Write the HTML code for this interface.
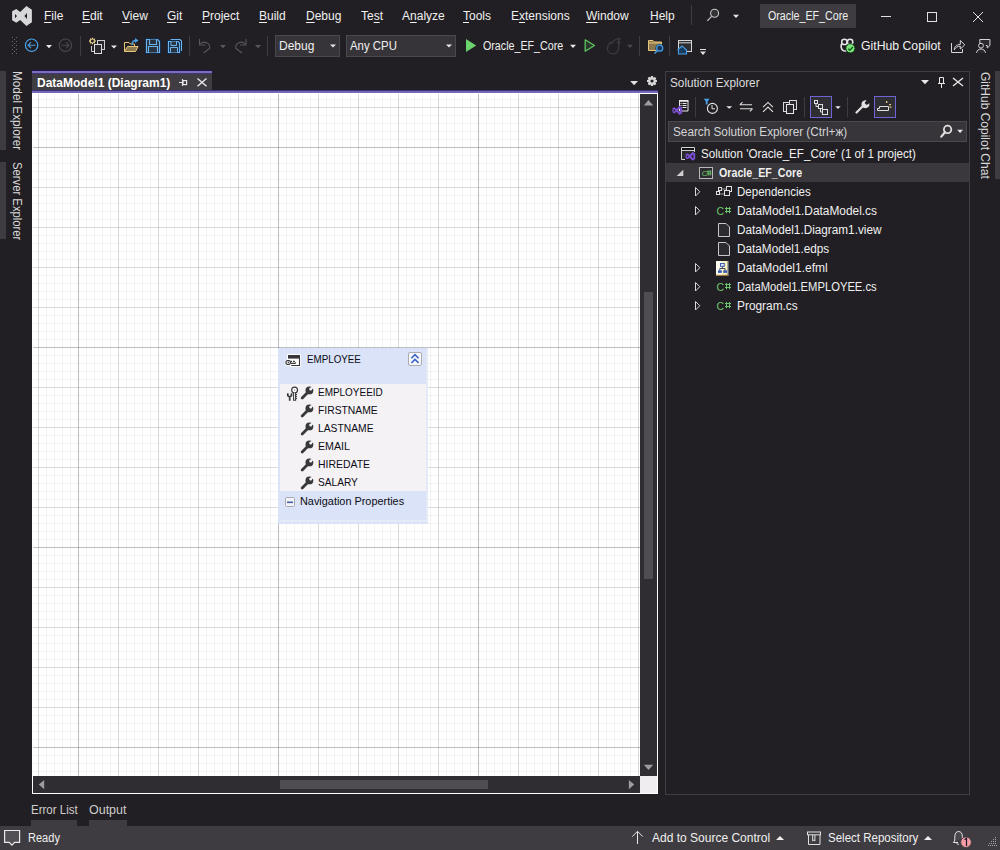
<!DOCTYPE html>
<html><head><meta charset="utf-8">
<style>
*{box-sizing:border-box;margin:0;padding:0}
html,body{width:1000px;height:850px;overflow:hidden;background:#211f23;font-family:"Liberation Sans",sans-serif;font-size:12px;color:#f0f0f0;position:relative}
.a{position:absolute}
.t{position:absolute;white-space:pre;line-height:1;transform-origin:0 0}
.menu .t{top:10px;color:#f0f0f0}
.u{text-decoration:underline;text-decoration-thickness:1px;text-underline-offset:2px}
.combo{position:absolute;top:35px;height:22px;background:#363438;border:1px solid #4a484c}
#grid{position:absolute;left:33px;top:94px;width:607px;height:682px;background-color:#fff;
background-image:
linear-gradient(to right,rgba(50,46,56,.16) 0 1px,transparent 1px),
linear-gradient(to bottom,rgba(50,46,56,.16) 0 1px,transparent 1px),
linear-gradient(to right,rgba(50,46,56,.128) 0 1px,transparent 1px),
linear-gradient(to bottom,rgba(50,46,56,.128) 0 1px,transparent 1px),
linear-gradient(to right,rgba(50,46,56,.058) 0 1px,transparent 1px),
linear-gradient(to bottom,rgba(50,46,56,.058) 0 1px,transparent 1px);
background-size:200px 100%,100% 200px,40px 100%,100% 40px,8px 100%,100% 8px;
background-position:45px 0,0 53px,5px 0,0 13px,5px 0,0 5px;
}
.se .t{color:#f0f0f0}
.ent .t{font-size:11px;color:#0c0c14}
.vt{position:absolute;white-space:pre;line-height:1;transform-origin:0 0;color:#d8d8d8}

</style></head><body>
<!-- ===== menu bar ===== -->
<div class="menu">
<span class="t" style="left:44px"><span class="u">F</span>ile</span>
<span class="t" style="left:82px"><span class="u">E</span>dit</span>
<span class="t" style="left:122px"><span class="u">V</span>iew</span>
<span class="t" style="left:167px"><span class="u">G</span>it</span>
<span class="t" style="left:202px"><span class="u">P</span>roject</span>
<span class="t" style="left:259px"><span class="u">B</span>uild</span>
<span class="t" style="left:306px"><span class="u">D</span>ebug</span>
<span class="t" style="left:361px">Te<span class="u">s</span>t</span>
<span class="t" style="left:402px">A<span class="u">n</span>alyze</span>
<span class="t" style="left:463px"><span class="u">T</span>ools</span>
<span class="t" style="left:511px">E<span class="u">x</span>tensions</span>
<span class="t" style="left:586px"><span class="u">W</span>indow</span>
<span class="t" style="left:650px"><span class="u">H</span>elp</span>
</div>
<div class="a" style="left:760px;top:4px;width:96px;height:24px;background:#3e3c40"></div>
<span class="t" style="left:768px;top:10px;color:#f0f0f0;transform:scaleX(0.89)">Oracle_EF_Core</span>

<!-- ===== toolbar ===== -->
<div class="combo" style="left:275px;width:65px"></div>
<span class="t" style="left:279px;top:40px">Debug</span>
<div class="combo" style="left:346px;width:110px"></div>
<span class="t" style="left:350px;top:40px;transform:scaleX(0.95)">Any CPU</span>
<span class="t" style="left:483px;top:40px;transform:scaleX(0.89)">Oracle_EF_Core</span>
<span class="t" style="left:861px;top:40px;transform:scaleX(1.02)">GitHub Copilot</span>

<!-- ===== left strip ===== -->
<div class="a" style="left:0;top:71px;width:6px;height:79px;background:#3e3c40"></div>
<div class="a" style="left:0;top:162px;width:6px;height:77px;background:#3e3c40"></div>
<span class="vt" style="left:23px;top:71px;transform:rotate(90deg) scaleX(0.98)">Model Explorer</span>
<span class="vt" style="left:23px;top:162px;transform:rotate(90deg) scaleX(0.94)">Server Explorer</span>

<!-- ===== doc tab ===== -->
<div class="a" style="left:32px;top:70px;width:180px;height:20px;background:#3f3d41"></div>
<div class="a" style="left:32px;top:70px;width:180px;height:1px;background:#1c1456"></div>
<div class="a" style="left:32px;top:71px;width:180px;height:2px;background:#7c6fba"></div>
<div class="a" style="left:32px;top:73px;width:180px;height:1px;background:#40347a"></div>
<div class="a" style="left:32px;top:90px;width:626px;height:1px;background:#3a2f78"></div>
<div class="a" style="left:32px;top:91px;width:626px;height:2px;background:#7367b6"></div>
<span class="t" style="left:37px;top:77px;font-weight:bold;color:#fff">DataModel1 (Diagram1)</span>

<!-- ===== editor ===== -->
<div class="a" style="left:32px;top:93px;width:626px;height:701px;background:#fff"></div>
<div id="grid"></div>
<div class="a" style="left:640px;top:94px;width:17px;height:682px;background:#2f2d31"></div>
<div class="a" style="left:644px;top:292px;width:9px;height:287px;background:#4f4d51"></div>
<div class="a" style="left:33px;top:776px;width:607px;height:17px;background:#2f2d31"></div>
<div class="a" style="left:280px;top:780px;width:208px;height:9px;background:#4f4d51"></div>
<div class="a" style="left:640px;top:776px;width:17px;height:17px;background:#efedf0"></div>

<!-- entity -->
<div class="ent">
<div class="a" style="left:278px;top:348px;width:150px;height:176px;background:#dae3f7"></div>
<div class="a" style="left:426px;top:350px;width:2px;height:172px;background:#e5eaf8"></div>
<div class="a" style="left:280px;top:520px;width:147px;height:2px;background:#e5eaf8"></div>
<div class="a" style="left:280px;top:384px;width:146px;height:107px;background:#f4f2f5"></div>
<span class="t" style="left:307px;top:354px;transform:scaleX(0.89)">EMPLOYEE</span>
<span class="t" style="left:318px;top:387px;transform:scaleX(0.905)">EMPLOYEEID</span>
<span class="t" style="left:318px;top:405px;transform:scaleX(0.94)">FIRSTNAME</span>
<span class="t" style="left:318px;top:423px;transform:scaleX(0.936)">LASTNAME</span>
<span class="t" style="left:318px;top:441px;transform:scaleX(0.97)">EMAIL</span>
<span class="t" style="left:318px;top:459px;transform:scaleX(0.95)">HIREDATE</span>
<span class="t" style="left:318px;top:477px;transform:scaleX(0.92)">SALARY</span>
<span class="t" style="left:300px;top:496px;transform:scaleX(0.99)">Navigation Properties</span>
</div>

<!-- ===== solution explorer ===== -->
<div class="a" style="left:665px;top:71px;width:305px;height:724px;border:1px solid #3f3e42"></div>
<span class="t" style="left:670px;top:77px;color:#dcdcdc;transform:scaleX(0.98)">Solution Explorer</span>
<div class="a" style="left:668px;top:121px;width:299px;height:21px;background:#37353a;border:1px solid #4a484c"></div>
<span class="t" style="left:673px;top:126px;color:#d4d4d4;transform:scaleX(0.98)">Search Solution Explorer (Ctrl+ж)</span>
<div class="a" style="left:666px;top:163px;width:303px;height:19px;background:#3a383c"></div>
<div class="se">
<span class="t" style="left:701px;top:148px;transform:scaleX(0.968)">Solution 'Oracle_EF_Core' (1 of 1 project)</span>
<span class="t" style="left:719px;top:167px;font-weight:bold;transform:scaleX(0.89)">Oracle_EF_Core</span>
<span class="t" style="left:737px;top:186px;transform:scaleX(0.96)">Dependencies</span>
<span class="t" style="left:737px;top:205px;transform:scaleX(0.99)">DataModel1.DataModel.cs</span>
<span class="t" style="left:737px;top:224px;transform:scaleX(0.98)">DataModel1.Diagram1.view</span>
<span class="t" style="left:737px;top:243px;transform:scaleX(0.98)">DataModel1.edps</span>
<span class="t" style="left:737px;top:262px;transform:scaleX(1.0)">DataModel1.efml</span>
<span class="t" style="left:737px;top:281px;transform:scaleX(0.935)">DataModel1.EMPLOYEE.cs</span>
<span class="t" style="left:737px;top:300px;transform:scaleX(0.99)">Program.cs</span>
</div>

<!-- right strip -->
<div class="a" style="left:995px;top:71px;width:5px;height:108px;background:#3e3c40"></div>
<span class="vt" style="left:991px;top:72px;transform:rotate(90deg)">GitHub Copilot Chat</span>

<!-- ===== bottom tabs ===== -->
<span class="t" style="left:31px;top:804px;color:#cfcdcb;transform:scaleX(0.96)">Error List</span>
<span class="t" style="left:89px;top:804px;color:#cfcdcb;transform:scaleX(1.04)">Output</span>
<div class="a" style="left:31px;top:820px;width:46px;height:6px;background:#3e3c40"></div>
<div class="a" style="left:89px;top:820px;width:38px;height:6px;background:#3e3c40"></div>

<!-- ===== status bar ===== -->
<div class="a" style="left:0;top:826px;width:1000px;height:24px;background:#3e3c40"></div>
<span class="t" style="left:28px;top:832px;transform:scaleX(0.92)">Ready</span>
<span class="t" style="left:652px;top:832px">Add to Source Control</span>
<span class="t" style="left:828px;top:832px;transform:scaleX(0.96)">Select Repository</span>

<svg class="a" style="left:0;top:0;z-index:5" width="1000" height="850" viewBox="0 0 1000 850">
<!-- VS logo -->
<path d="M12.1 11.3 L16.3 9 L20.2 12.1 L26.4 6 L31.9 9.7 V22.3 L26.4 25.9 L20.2 20.1 L16.3 22.8 L12.1 20.2 Z M15 13.9 L17 16.1 L15 18.2 Z M27 13 L24.4 16.1 L27 19 Z" fill="#d7d6d9" fill-rule="evenodd"/>
<!-- title bar: separator, search, dropdown -->
<rect x="691" y="5" width="1" height="20" fill="#3d3c40"/>
<circle cx="714.6" cy="13.2" r="4" fill="#333236" stroke="#c8c8c8" stroke-width="1.1"/>
<path d="M711.6 16.3 L707.3 20.8" stroke="#c8c8c8" stroke-width="1.2"/>
<path d="M733 14.8 H739 L736 18 Z" fill="#e8e8e8"/>
<!-- window controls -->
<rect x="881" y="16" width="10" height="1" fill="#e0e0e0"/>
<rect x="927.5" y="12.5" width="9" height="9" fill="none" stroke="#e0e0e0" stroke-width="1"/>
<path d="M973 12 L983 22 M983 12 L973 22" stroke="#e0e0e0" stroke-width="1"/>

<!-- toolbar gripper -->
<g fill="#6a6a6e">
<rect x="12" y="37" width="1" height="1"/><rect x="16" y="37" width="1" height="1"/>
<rect x="14" y="39" width="1" height="1"/>
<rect x="12" y="41" width="1" height="1"/><rect x="16" y="41" width="1" height="1"/>
<rect x="14" y="43" width="1" height="1"/>
<rect x="12" y="45" width="1" height="1"/><rect x="16" y="45" width="1" height="1"/>
<rect x="14" y="47" width="1" height="1"/>
<rect x="12" y="49" width="1" height="1"/><rect x="16" y="49" width="1" height="1"/>
<rect x="14" y="51" width="1" height="1"/>
<rect x="12" y="53" width="1" height="1"/><rect x="16" y="53" width="1" height="1"/>
</g>
<!-- back / forward -->
<circle cx="31.6" cy="45.2" r="6.2" fill="none" stroke="#4aa0e6" stroke-width="1.2"/>
<path d="M28 45.2 H35.5 M31 42.2 L28 45.2 L31 48.2" fill="none" stroke="#4aa0e6" stroke-width="1.1"/>
<path d="M46 45 H52 L49 48.2 Z" fill="#e8e8e8"/>
<circle cx="65.4" cy="45.2" r="6.2" fill="none" stroke="#48474b" stroke-width="1.1"/>
<path d="M61.5 45.2 H69 M66 42.2 L69 45.2 L66 48.2" fill="none" stroke="#48474b" stroke-width="1.1"/>
<rect x="80" y="36" width="1" height="20" fill="#3d3c40"/>
<!-- new project -->
<rect x="97.5" y="40.5" width="7" height="9" fill="#2a282c" stroke="#cfcdd1" stroke-width="1"/>
<rect x="94.5" y="44.5" width="7" height="9" fill="#2a282c" stroke="#dedce0" stroke-width="1"/>
<path d="M91.5 46 V51.5 H94" fill="none" stroke="#cfcdd1" stroke-width="1"/>
<path d="M93.80 41.00 L95.70 41.00 M93.39 41.99 L94.73 43.33 M92.40 42.40 L92.40 44.30 M91.41 41.99 L90.07 43.33 M91.00 41.00 L89.10 41.00 M91.41 40.01 L90.07 38.67 M92.40 39.60 L92.40 37.70 M93.39 40.01 L94.73 38.67 " stroke="#f7de94" stroke-width="1.3"/>
<path d="M111 45.5 H117 L114 48.5 Z" fill="#e8e8e8"/>
<!-- open folder -->
<path d="M124.5 42.5 H129 L130.5 44 H134.5 V46.5" fill="none" stroke="#e8c77c" stroke-width="1"/>
<path d="M124.5 42.5 V51.5 H135.5 L138 46.5 H127.5 L124.5 51.5" fill="#8b7750" stroke="#e8c77c" stroke-width="1"/>
<path d="M132 45 C132 41.5 133.5 40.5 136 40.5" fill="none" stroke="#4aa0e6" stroke-width="1.3"/>
<path d="M135 38 L138.5 40.5 L135 43 Z" fill="#4aa0e6"/>
<!-- save -->
<g fill="none" stroke="#0b2e55" stroke-width="2.6">
<path d="M146.5 39.5 H157.5 L159.5 41.5 V52.5 H146.5 Z"/>
</g>
<path d="M146.5 39.5 H157.5 L159.5 41.5 V52.5 H146.5 Z" fill="#25303d" stroke="#6db4ee" stroke-width="1.1"/>
<path d="M149.5 39.5 V44.5 H156.5 V39.5" fill="#2a3440" stroke="#6db4ee" stroke-width="1.1"/>
<path d="M148.5 52.5 V46.5 H157.5 V52.5" fill="#2a3440" stroke="#6db4ee" stroke-width="1.1"/>
<!-- save all -->
<path d="M170.5 39.5 H180 L181.5 41 V51" fill="none" stroke="#6db4ee" stroke-width="1.1"/>
<path d="M168.5 41.5 H178 L179.5 43 V52.5 H168.5 Z" fill="#25303d" stroke="#0b2e55" stroke-width="2.4"/>
<path d="M168.5 41.5 H178 L179.5 43 V52.5 H168.5 Z" fill="none" stroke="#6db4ee" stroke-width="1.1"/>
<path d="M171 41.5 V45.5 H176.5 V41.5" fill="#2a3440" stroke="#6db4ee" stroke-width="1"/>
<path d="M170.5 52.5 V47.5 H177.5 V52.5" fill="#2a3440" stroke="#6db4ee" stroke-width="1"/>
<rect x="189" y="36" width="1" height="20" fill="#3d3c40"/>
<!-- undo / redo -->
<g fill="none" stroke="#58575c" stroke-width="1.1">
<path d="M199.5 39 V45 H205.5"/>
<path d="M200.3 43.8 A5.6 5.6 0 0 1 209.8 48.2 L203.5 53"/>
<path d="M246 39 V45 H240"/>
<path d="M245.2 43.8 A5.6 5.6 0 0 0 235.7 48.2 L242 53"/>
</g>
<path d="M220 45 H226 L223 48.2 Z" fill="#58575c"/>
<path d="M255 45 H261 L258 48.2 Z" fill="#58575c"/>
<rect x="267" y="36" width="1" height="20" fill="#3d3c40"/>
<!-- combo arrows -->
<path d="M330 44.5 H336 L333 47.6 Z" fill="#e8e8e8"/>
<path d="M446 44.5 H452 L449 47.6 Z" fill="#e8e8e8"/>
<!-- run -->
<path d="M466 39 L476.2 45.5 L466 52 Z" fill="#6cd26e"/>
<path d="M570 44.8 H576 L573 48 Z" fill="#e8e8e8"/>
<path d="M585.2 39.8 L594.5 45.5 L585.2 51.2 Z" fill="#2c3a2e" stroke="#5dc65f" stroke-width="1.3" stroke-linejoin="round"/>
<path d="M613 53.8 C609.6 53.8 607.4 51.4 607.4 48.4 C607.4 45.6 608.9 43.6 610.4 42.2 L611.8 43.4 C613.4 40.6 616.4 38.6 620.2 38.4 C618.6 40 617.9 41.6 617.8 43.2 L619.9 42 C618.6 44.2 618.5 46.2 618.5 48.6 C618.5 51.6 616.3 53.8 613 53.8 Z" fill="none" stroke="#3c3a3e" stroke-width="1.3" stroke-linejoin="round"/>
<path d="M627 44.8 H633 L630 48 Z" fill="#48474b"/>
<rect x="639" y="36" width="1" height="20" fill="#3d3c40"/>
<!-- folder search -->
<path d="M648.5 40.5 H653 L654.5 42 H661.5 V50.5 H648.5 Z" fill="#8b7750" stroke="#e8c77c" stroke-width="1"/>
<path d="M648.5 43 H661.5" stroke="#e8c77c" stroke-width="1"/>
<circle cx="659.7" cy="48.2" r="3.2" fill="#1f3550" stroke="#0b2e55" stroke-width="2.2"/>
<circle cx="659.7" cy="48.2" r="3" fill="none" stroke="#4aa0e6" stroke-width="1.2"/>
<path d="M657.4 50.6 L654.5 53.6" stroke="#4aa0e6" stroke-width="1.4"/>
<rect x="669" y="36" width="1" height="20" fill="#3d3c40"/>
<!-- window home -->
<rect x="678.5" y="40.5" width="13" height="11" fill="#2e2d31" stroke="#d8d8d8" stroke-width="1"/>
<path d="M678.5 42.8 H691.5" stroke="#d8d8d8" stroke-width="1"/>
<path d="M677.5 50 L682 46 L686.5 50 V54 H678.5 V50" fill="#1a3a5e" stroke="#4aa0e6" stroke-width="1.1"/>
<path d="M700 49.5 H706" stroke="#e0e0e0" stroke-width="1"/>
<path d="M700 51.5 H706 L703 55 Z" fill="#e0e0e0"/>
<!-- copilot -->
<circle cx="844.4" cy="41.9" r="2.7" fill="#211f23" stroke="#e8e6ea" stroke-width="1.5"/>
<circle cx="850.1" cy="41.9" r="2.7" fill="#211f23" stroke="#e8e6ea" stroke-width="1.5"/>
<path d="M841.8 43.5 C840.6 45.5 840.8 49.5 843.5 50.8 L846.5 51" fill="none" stroke="#e8e6ea" stroke-width="1.6"/>
<circle cx="850.4" cy="48.3" r="4.6" fill="#7be47b" stroke="#0b2a0b" stroke-width="0.9"/>
<path d="M848.2 48.6 L849.8 50.2 L852.9 47" fill="none" stroke="#0d5a12" stroke-width="1.3"/>
<!-- share -->
<path d="M951.5 43 V52.5 H962.5 V49" fill="none" stroke="#d8d6da" stroke-width="1"/>
<path d="M954.3 49.8 C954.3 46.5 956.5 44.5 960.3 44.5 V40.5 L964.8 44.8 L960.3 49 V46.2 C957.5 46.2 955.5 47.5 954.3 49.8 Z" fill="none" stroke="#d8d6da" stroke-width="1" stroke-linejoin="round"/>
<!-- feedback -->
<path d="M979.8 44 V39.5 H989.9 V45.5 L987.2 48 V45.5 H985.8" fill="#2a282c" stroke="#d8d6da" stroke-width="1"/>
<circle cx="981" cy="45.7" r="2.4" fill="#211f23" stroke="#d8d6da" stroke-width="1"/>
<path d="M976.5 52.8 C977 50.2 978.8 49 981 49 C983.2 49 985 50.2 985.5 52.8" fill="#2a282c" stroke="#d8d6da" stroke-width="1"/>

<!-- doc well: dropdown, gear -->
<path d="M630.2 81 H638 L634.1 85.2 Z" fill="#e0e0e0"/>
<g transform="translate(652,81)">
<path d="M-1 -5 H1 L1.4 -3.3 L3 -4 L4.4 -2.6 L3.3 -1.2 L5 -0.8 V1 L3.4 1.3 L4.2 2.9 L2.8 4.3 L1.3 3.4 L1 5 H-1 L-1.3 3.4 L-2.8 4.3 L-4.2 2.9 L-3.4 1.3 L-5 1 V-1 L-3.4 -1.3 L-4.3 -2.8 L-2.9 -4.2 L-1.4 -3.4 Z" fill="#d8d8d8"/>
<circle r="1.6" fill="#211f23"/>
</g>
<!-- tab pin / close -->
<path d="M179 82.5 H182.5 M182.5 79 V86" fill="none" stroke="#e8e6ea" stroke-width="1.1"/>
<rect x="183" y="80.6" width="3.6" height="4" fill="#3f3d41" stroke="#e8e6ea" stroke-width="1.2"/>
<path d="M197.5 78.5 L206.5 86.3 M206.5 78.5 L197.5 86.3" stroke="#e4e2e6" stroke-width="1.5"/>
<!-- scrollbar arrows -->
<path d="M643.8 105.4 L648.5 100 L653.2 105.4 Z" fill="#9d9ca0"/>
<path d="M643.8 764.7 L648.5 770 L653.2 764.7 Z" fill="#9d9ca0"/>
<path d="M44.2 780 L38.8 784.6 L44.2 789.2 Z" fill="#9d9ca0"/>
<path d="M628.9 780 L634.2 784.6 L628.9 789.2 Z" fill="#9d9ca0"/>

<!-- solution explorer header -->
<path d="M921 80 H929 L925 84.2 Z" fill="#e8e8e8"/>
<path d="M939.5 77.5 H943.5 V83.5 H939.5 Z M938 83.5 H945 M941.5 84 V88" fill="none" stroke="#e8e8e8" stroke-width="1"/>
<path d="M953 78 L963 86 M963 78 L953 86" stroke="#e8e8e8" stroke-width="1.4"/>

<!-- ===== SE toolbar ===== -->
<!-- home: doc + vs logo -->
<path d="M679.5 111 V101 H688 V111 Z" fill="#211f23" stroke="#e8e8e8" stroke-width="1"/>
<rect x="679" y="100" width="9.5" height="1.6" fill="#e8e8e8"/>
<path d="M680.5 103.5 H681.5 M682.5 103.5 H686.5 M680.5 105.5 H681.5 M682.5 105.5 H686.5 M680.5 107.5 H681.5 M682.5 107.5 H686.5" stroke="#e8e8e8" stroke-width="1"/>
<path transform="translate(666.5,103.1) scale(0.49,0.455)" d="M12.1 11.3 L16.3 9 L20.2 13.2 L26.4 6 L31.9 9.7 V22.3 L26.4 25.9 L20.2 19 L16.3 22.8 L12.1 20.2 Z M14.6 12.8 L18.2 16.1 L14.6 19.4 Z M28 11.2 L23.4 16.1 L28 21 Z" fill="#7b4fd6" fill-rule="evenodd"/>
<rect x="695" y="97" width="1" height="20" fill="#3d3c40"/>
<!-- history -->
<circle cx="712.4" cy="108.4" r="5" fill="#211f23" stroke="#e0e0e0" stroke-width="1.1"/>
<path d="M712 105 V108.8 H715" fill="none" stroke="#e0e0e0" stroke-width="1"/>
<path d="M703.8 98.8 H709.6 L707.6 101.4 V104.5 H705.8 V101.4 Z" fill="#4aa0e6"/>
<path d="M726.2 106.2 H732.2 L729.2 108.8 Z" fill="#e8e8e8"/>
<!-- sync -->
<path d="M739.8 104.8 H752 M742.5 102.2 L739.8 104.8 M740 108.8 H752.5 M749.8 111.4 L752.5 108.8" fill="none" stroke="#e0e0e0" stroke-width="1.1"/>
<!-- collapse all -->
<path d="M763 107.2 L768 102.4 L773 107.2 M763 111.8 L768 107 L773 111.8" fill="none" stroke="#e0e0e0" stroke-width="1.1"/>
<!-- copy -->
<rect x="789.5" y="100.5" width="7" height="9" fill="#2a282c" stroke="#d8d6da" stroke-width="1"/>
<rect x="783.5" y="102.5" width="6" height="9" fill="#2a282c" stroke="#d8d6da" stroke-width="1"/>
<rect x="786.5" y="104.5" width="7" height="9" fill="#2a282c" stroke="#e8e6ea" stroke-width="1"/>
<rect x="804" y="97" width="1" height="20" fill="#3d3c40"/>
<!-- toggle 1 -->
<rect x="810.5" y="96.5" width="21" height="21" fill="#2f2e33" stroke="#6f63d8" stroke-width="1"/>
<rect x="814.5" y="100.5" width="3" height="3" fill="none" stroke="#e0e0e0" stroke-width="1"/>
<rect x="818.5" y="104.5" width="4" height="4" fill="none" stroke="#e0e0e0" stroke-width="1"/>
<rect x="822.5" y="109.5" width="5" height="5" fill="none" stroke="#e0e0e0" stroke-width="1"/>
<path d="M816 103.5 V106.5 H818.5 M820.5 108.5 V112 H822.5" fill="none" stroke="#e0e0e0" stroke-width="1"/>
<path d="M835.2 106.3 H840.7 L838 109 Z" fill="#e8e8e8"/>
<rect x="847" y="97" width="1" height="20" fill="#3d3c40"/>
<!-- wrench -->
<path d="M856.5 112.5 L863 106" stroke="#e0e0e0" stroke-width="2.2" stroke-linecap="round"/>
<path d="M862 106.8 A4.2 4.2 0 0 1 866.5 100.4 L864.6 103 L866.6 105 L869.4 103.2 A4.2 4.2 0 0 1 863 107.6 Z" fill="#e0e0e0"/>
<!-- toggle 2 -->
<rect x="874.5" y="96.5" width="21" height="21" fill="#2f2e33" stroke="#6f63d8" stroke-width="1"/>
<path d="M877.5 110.5 V108.5 H879.5 V106.5 H888.5 V110.5 Z" fill="none" stroke="#e0e0e0" stroke-width="1"/>
<rect x="886" y="101" width="1.3" height="2" fill="#e8c77c"/>
<rect x="889" y="104" width="2" height="1.2" fill="#e8c77c"/>
<rect x="889.5" y="106.5" width="2" height="1.2" fill="#e8c77c"/>

<!-- search magnifier -->
<circle cx="947.6" cy="129.4" r="3.7" fill="none" stroke="#e0e0e0" stroke-width="1.8"/>
<path d="M945 132.2 L941.3 136.6" stroke="#e0e0e0" stroke-width="2.2" stroke-linecap="round"/>
<path d="M957.2 129.8 H963 L960.1 133 Z" fill="#e8e8e8"/>

<!-- ===== tree ===== -->
<!-- solution icon -->
<path d="M685 159.5 H681.5 V147.5 H694.5 V152" fill="#2a292d" stroke="#d0d0d0" stroke-width="1"/>
<path d="M681.5 150.5 H694.5" stroke="#d0d0d0" stroke-width="1"/><rect x="682" y="148" width="12" height="2" fill="#141316"/>
<path transform="translate(679.9,149.3) scale(0.48,0.44)" d="M12.1 11.3 L16.3 9 L20.2 13.2 L26.4 6 L31.9 9.7 V22.3 L26.4 25.9 L20.2 19 L16.3 22.8 L12.1 20.2 Z M14.6 12.8 L18.2 16.1 L14.6 19.4 Z M28 11.2 L23.4 16.1 L28 21 Z" fill="#7b4fd6" fill-rule="evenodd"/>
<!-- expanded triangle -->
<path d="M683.3 169.7 V176 H676.6 Z" fill="#d0d0d0"/>
<!-- C# project icon -->
<rect x="699.5" y="167.5" width="13" height="11" fill="#2d2c30" stroke="#b8b8b8" stroke-width="1"/>
<text x="701.8" y="176.3" font-family="Liberation Sans" font-size="8" fill="#6cc56c">C</text><path d="M708.2 170.2 V175.6 M710.2 170.2 V175.6 M706.8 171.8 H711.6 M706.8 173.9 H711.6" stroke="#6cc56c" stroke-width="0.9"/>
<!-- collapsed triangles -->
<g fill="none" stroke="#d8d8d8" stroke-width="1">
<path d="M695.5 187.5 V196 L699.8 191.7 Z"/>
<path d="M695.5 206.5 V215 L699.8 210.7 Z"/>
<path d="M695.5 263.5 V272 L699.8 267.7 Z"/>
<path d="M695.5 282.5 V291 L699.8 286.7 Z"/>
<path d="M695.5 301.5 V310 L699.8 305.7 Z"/>
</g>
<!-- dependencies icon -->
<g fill="#211f23" stroke="#e0e0e0" stroke-width="1">
<rect x="726.5" y="186.5" width="5" height="5"/>
<rect x="718.5" y="187.5" width="3" height="3"/>
<path d="M721.5 189 H726.5 M720 194 H724.5" stroke="#9a9a9a"/>
<rect x="716.5" y="191.5" width="3" height="3"/>
<rect x="724.5" y="190.5" width="5" height="5"/>
</g>
<!-- C# glyphs -->
<g font-family="Liberation Sans" font-size="10.5" fill="#6cc56c">
<text x="716.4" y="215.2">C</text><text x="716.4" y="291.2">C</text><text x="716.4" y="310.2">C</text>
</g>
<g stroke="#6cc56c" stroke-width="1">
<path d="M726.5 207 V213.2 M729.5 207 V213.2 M725 208.5 H731 M725 211.5 H731"/>
<path d="M726.5 283 V289.2 M729.5 283 V289.2 M725 284.5 H731 M725 287.5 H731"/>
<path d="M726.5 302 V308.2 M729.5 302 V308.2 M725 303.5 H731 M725 306.5 H731"/>
</g>
<!-- document icons -->
<path d="M718.5 223.5 H726 L729.5 227 V236.5 H718.5 Z" fill="#2c2b2f" stroke="#c8c8c8" stroke-width="1"/>
<path d="M718.5 242.5 H726 L729.5 246 V255.5 H718.5 Z" fill="#2c2b2f" stroke="#c8c8c8" stroke-width="1"/>
<!-- efml icon -->
<rect x="716" y="261" width="12.6" height="14.8" fill="#f8f0c0"/>
<rect x="716" y="261" width="6" height="14.8" fill="#fdfbee"/>
<rect x="727.6" y="261" width="1" height="14.8" fill="#34446e"/>
<rect x="716" y="274.8" width="12.6" height="1" fill="#8a6a20"/>
<rect x="720" y="263" width="4.8" height="3.8" fill="#3c5cb0"/>
<rect x="721" y="264" width="2.8" height="1.8" fill="#dde8ff"/>
<path d="M722.4 266.8 V268.5 M719.8 270.5 V268.5 H725 V270.5" fill="none" stroke="#303a50" stroke-width="0.9"/>
<rect x="718" y="270.3" width="3.8" height="2.6" fill="#3c5cb0"/>
<rect x="723.2" y="270.3" width="3.8" height="2.6" fill="#3c5cb0"/>

<!-- ===== entity icons ===== -->
<!-- entity table icon -->
<path d="M287 354 H301 V367 H290 V365 H287 Z" fill="#ffffff"/>
<rect x="288" y="355" width="12" height="3.6" fill="#38373b"/>
<path d="M299.5 358 V365.5 H291.2" fill="none" stroke="#38373b" stroke-width="1.1"/>
<path d="M285.4 360 H291 V365.5 H285.4 Z" fill="#ffffff"/>
<path d="M287 360.6 H289.3 L290.4 361.7 V363.3 L289.3 364.4 H287 L286 363.3 V361.7 Z" fill="#fff" stroke="#38373b" stroke-width="1.1"/>
<circle cx="288.4" cy="362.4" r="0.7" fill="#38373b"/>
<path d="M290.5 361.4 H292 M293 361.4 H294.8 M290.5 363.4 H295 L295.8 362.4" fill="none" stroke="#38373b" stroke-width="1.1"/>
<!-- collapse button -->
<rect x="408.5" y="352.5" width="13" height="13" rx="1.5" fill="#f6f7fc" stroke="#acabb0" stroke-width="1"/>
<path d="M411.4 358.2 L415 354.6 L418.6 358.2 M411.4 363 L415 359.4 L418.6 363" fill="none" stroke="#3c62c8" stroke-width="1.6"/>
<!-- key + small wrench -->
<path d="M287.8 393.2 V395.6 L289.7 397.2 L291.5 395.6 V393.2 M289.7 397 V400.8" fill="none" stroke="#38373b" stroke-width="1.7"/>
<circle cx="294.6" cy="390.1" r="2.9" fill="#fff" stroke="#38373b" stroke-width="1.2"/>
<rect x="294" y="389.5" width="1.2" height="1.2" fill="#8a8a8e"/>
<path d="M293.6 393 V400.3 H295.6 V393" fill="#fff" stroke="#38373b" stroke-width="1.1"/>
<path d="M296 394.5 H297 M296 396.5 H297 M296 398.5 H297" stroke="#38373b" stroke-width="1.1"/>
<!-- big wrenches -->
<g id="wr">
<path d="M302.2 397.9 L307.6 392.5" stroke="#38373b" stroke-width="2.8" stroke-linecap="round"/>
<circle cx="309.4" cy="390.4" r="3.9" fill="#38373b"/>
<circle cx="310.7" cy="389.1" r="1.5" fill="#f4f2f5"/>
<path d="M310 388.4 L312.6 385.8 L314.2 387.4 L311.4 389.8 Z" fill="#f4f2f5"/>
</g>
<use href="#wr" y="18"/><use href="#wr" y="36"/><use href="#wr" y="54"/><use href="#wr" y="72"/><use href="#wr" y="90"/>
<!-- minus box -->
<rect x="285.5" y="497.5" width="9" height="9" rx="1" fill="#f2f3f8" stroke="#a8a8b0" stroke-width="1"/>
<rect x="287" y="501.5" width="6" height="1.6" fill="#4a5ca8"/>

<!-- ===== status bar icons ===== -->
<path d="M4.6 830.5 H19.6 V842.3 H14.6 L11.9 845.2 L9.2 842.3 H4.6 Z" fill="#525055" stroke="#e8e8e8" stroke-width="1.2"/>
<path d="M637.5 831.5 V844 M632.2 836.6 L637.5 831.3 L642.8 836.6" fill="none" stroke="#e8e8e8" stroke-width="1"/>
<path d="M776 840.1 L780 835.9 L784.1 840.1 Z" fill="#f0f0f0"/>
<rect x="807.5" y="832" width="13" height="2.8" fill="none" stroke="#e0e0e0" stroke-width="1"/>
<path d="M808.5 835 V844.5 H820 V835" fill="none" stroke="#e0e0e0" stroke-width="1"/>
<path d="M812.7 835 V841 L813.8 840 L814.9 841 V835" fill="none" stroke="#e0e0e0" stroke-width="1"/>
<path d="M924 840 L928 836 L932 840 Z" fill="#f0f0f0"/>
<path d="M953.4 842.5 C954.8 841 954.8 839.5 954.8 836.5 C954.8 833.2 956.5 831.5 958.6 831.5 C960.7 831.5 962.4 833.2 962.4 836.5 V838 M953.4 842.5 H958 M956.8 843.2 C957 844.2 958 844.6 959 844.2" fill="#4a484d" stroke="#e8e8e8" stroke-width="1"/>
<circle cx="966" cy="842.2" r="5.3" fill="#f39ca2" stroke="#3d3c40" stroke-width="0.8"/>
<path d="M964.6 839.8 L966.5 838.4 V846" fill="none" stroke="#1a1530" stroke-width="1.2"/>
<g fill="#a8a8ac">
<rect x="995" y="837" width="1" height="1"/>
<rect x="993" y="839" width="1" height="1"/><rect x="995" y="839" width="1" height="1"/>
<rect x="991" y="841" width="1" height="1"/><rect x="993" y="841" width="1" height="1"/><rect x="995" y="841" width="1" height="1"/>
<rect x="989" y="843" width="1" height="1"/><rect x="991" y="843" width="1" height="1"/><rect x="993" y="843" width="1" height="1"/><rect x="995" y="843" width="1" height="1"/>
<rect x="988" y="845" width="1" height="1"/><rect x="990" y="845" width="1" height="1"/><rect x="992" y="845" width="1" height="1"/><rect x="994" y="845" width="1" height="1"/><rect x="996" y="845" width="1" height="1"/>
</g>

</svg>
</body></html>
